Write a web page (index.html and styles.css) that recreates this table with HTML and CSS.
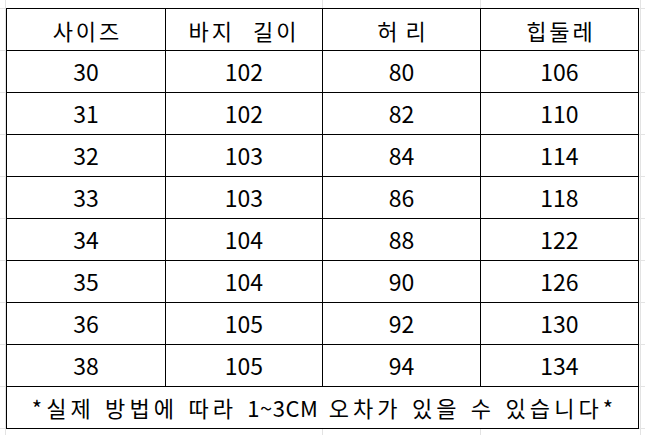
FILE: index.html
```html
<!DOCTYPE html>
<html lang="ko">
<head>
<meta charset="utf-8">
<title>사이즈 표</title>
<link rel="stylesheet" href="styles.css">
</head>
<body>
<div class="sheet">
  <div class="size-table">
    <div class="cell head">사이즈</div>
    <div class="cell head head-length">바지 길이</div>
    <div class="cell head head-waist">허리</div>
    <div class="cell head">힙둘레</div>

    <div class="cell">30</div><div class="cell">102</div><div class="cell">80</div><div class="cell">106</div>
    <div class="cell">31</div><div class="cell">102</div><div class="cell">82</div><div class="cell">110</div>
    <div class="cell">32</div><div class="cell">103</div><div class="cell">84</div><div class="cell">114</div>
    <div class="cell">33</div><div class="cell">103</div><div class="cell">86</div><div class="cell">118</div>
    <div class="cell">34</div><div class="cell">104</div><div class="cell">88</div><div class="cell">122</div>
    <div class="cell">35</div><div class="cell">104</div><div class="cell">90</div><div class="cell">126</div>
    <div class="cell">36</div><div class="cell">105</div><div class="cell">92</div><div class="cell">130</div>
    <div class="cell">38</div><div class="cell">105</div><div class="cell">94</div><div class="cell">134</div>

    <div class="cell note">*실제 방법에 따라 <span class="latin">1~3CM</span> 오차가 있을 수 있습니다*</div>
  </div>
</div>
</body>
</html>
```
FILE: styles.css
```css
html, body {
  margin: 0;
  padding: 0;
}
body {
  width: 645px;
  height: 435px;
  overflow: hidden;
  background-color: #ffffff;
  background-image:
    repeating-linear-gradient(to bottom, transparent 0, transparent 7px, #e3e3e3 7px, #e3e3e3 8px, transparent 8px, transparent 42px),
    linear-gradient(to right, transparent 5px, #e3e3e3 5px, #e3e3e3 6px, transparent 6px),
    linear-gradient(to right, transparent 322px, #e3e3e3 322px, #e3e3e3 323px, transparent 323px),
    linear-gradient(to right, transparent 480px, #e3e3e3 480px, #e3e3e3 481px, transparent 481px),
    linear-gradient(to right, transparent 640px, #e3e3e3 640px, #e3e3e3 641px, transparent 641px);
  background-position: 0 1px, 0 0, 0 0, 0 0, 0 0;
  font-family: "Noto Sans CJK KR", "Noto Sans", sans-serif;
  color: #000;
}
.sheet {
  padding: 8px 0 0 6px;
}
.size-table {
  display: grid;
  grid-template-columns: 158px 156px 157px 157px;
  grid-auto-rows: 41px;
  gap: 1px;
  padding: 1px;
  width: max-content;
  background: #000;
}
.cell {
  background: #fff;
  display: flex;
  align-items: center;
  justify-content: center;
  font-size: 23px;
  line-height: 1;
}
.head {
  font-size: 22px;
  letter-spacing: 3px;
  text-indent: 3px;
}
.head-length {
  word-spacing: 9px;
  text-indent: 0;
}
.head-waist {
  letter-spacing: 8px;
  text-indent: 8px;
}
.note {
  grid-column: 1 / -1;
  display: block;
  text-align: center;
  line-height: 41px;
  white-space: pre;
  letter-spacing: 4.1px;
  text-indent: 4px;
  font-size: 22px;
}
.latin {
  letter-spacing: 0.5px;
}
```
